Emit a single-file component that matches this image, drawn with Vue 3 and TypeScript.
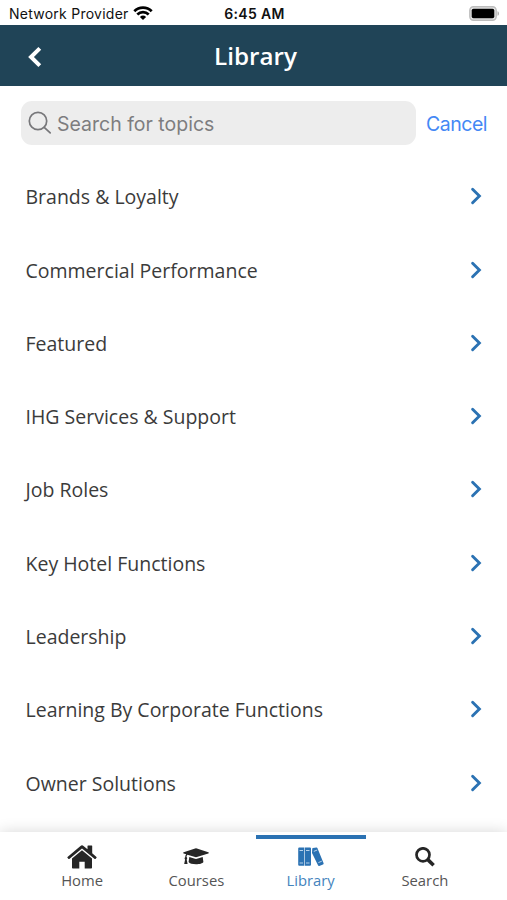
<script setup lang="ts">
import { ref } from 'vue'

type TabId = 'home' | 'courses' | 'library' | 'search'

interface Tab {
  id: TabId
  label: string
}

const topics: string[] = [
  'Brands & Loyalty',
  'Commercial Performance',
  'Featured',
  'IHG Services & Support',
  'Job Roles',
  'Key Hotel Functions',
  'Leadership',
  'Learning By Corporate Functions',
  'Owner Solutions',
]

const tabs: Tab[] = [
  { id: 'home', label: 'Home' },
  { id: 'courses', label: 'Courses' },
  { id: 'library', label: 'Library' },
  { id: 'search', label: 'Search' },
]

const activeTab = ref<TabId>('library')
const query = ref('')
</script>

<template>
  <div class="screen">
    <div class="status">
      <div class="carrier">
        <span>Network Provider</span>
        <svg class="wifi" viewBox="0 0 20 14" width="20" height="14">
          <g fill="none" stroke="#000" stroke-width="2.7">
            <path d="M1.3 5.2a12.4 12.4 0 0 1 17.4 0" />
            <path d="M4.3 8.5a8.1 8.1 0 0 1 11.4 0" />
          </g>
          <path d="M6.9 10.9a4.6 4.6 0 0 1 6.2 0L10 14z" fill="#000" />
        </svg>
      </div>
      <span class="time">6:45 AM</span>
      <svg class="battery" viewBox="0 0 31 15" width="31" height="15">
        <rect x=".8" y=".8" width="26.4" height="13.4" rx="3.6" fill="#e4e4e4" stroke="#bdbdbd" stroke-width="1.4" />
        <rect x="2.7" y="2.7" width="22.6" height="9.6" rx="1.8" fill="#000" />
        <path d="M28.5 5.2c2 .7 2 3.9 0 4.6z" fill="#b0b0b0" />
      </svg>
    </div>

    <header class="header">
      <button class="back" aria-label="Back">
        <svg viewBox="0 0 14 22" width="14" height="22">
          <path d="M11.8 2.3 3 11l8.8 8.7" fill="none" stroke="#fff" stroke-width="4" />
        </svg>
      </button>
      <h1>Library</h1>
    </header>

    <div class="search-row">
      <label class="search">
        <svg viewBox="0 0 24 24" width="24" height="24" fill="none" stroke="#77777a" stroke-width="1.7" stroke-linecap="round">
          <circle cx="10" cy="10" r="8.7" />
          <path d="m16.2 16.3 6 5.6" />
        </svg>
        <input v-model="query" type="text" placeholder="Search for topics" />
      </label>
      <button class="cancel" @click="query = ''">Cancel</button>
    </div>

    <ul class="topics">
      <li v-for="topic in topics" :key="topic">
        <span>{{ topic }}</span>
        <svg viewBox="0 0 12 18" width="12" height="18">
          <path d="m2.6 2.2 6.8 6.8-6.8 6.8" fill="none" stroke="#2b72b3" stroke-width="2.9" stroke-linecap="round" />
        </svg>
      </li>
    </ul>

    <nav class="tabbar">
      <button
        v-for="tab in tabs"
        :key="tab.id"
        class="tab"
        :class="{ active: tab.id === activeTab }"
        @click="activeTab = tab.id"
      >
        <svg v-if="tab.id === 'home'" viewBox="0 0 30 24" width="30" height="24" fill="currentColor">
          <path d="M15 5.200 25 13.400v9.300a.8.8 0 0 1-.8.8h-6.500v-6.700h-5.400v6.700H5.800a.8.8 0 0 1-.8-.8v-9.300z" />
          <path d="M13.500.9a2.300 2.300 0 0 1 3 0l4 3.400V1q0-.5.500-.5h3.700q.5 0 .5.500v7.200l4.300 3.700q.4.400 0 .8l-1 1.200q-.4.400-.8 0L15 3.400 2.300 13.900q-.4.400-.8 0l-1-1.200q-.4-.4 0-.8z" />
        </svg>
        <svg v-else-if="tab.id === 'courses'" viewBox="0 0 26 18" width="26" height="18" fill="currentColor">
          <path d="M12.100.4a3 3 0 0 1 1.800 0l11.400 3.800c.7.200.7 1 0 1.200L13.900 9a3 3 0 0 1-1.800 0L4.500 6.700c-.7.500-.9 1.300-1 2.400.9.600.9 1.700.2 2.300L4.600 16H1.200l.9-4.600c-.7-.6-.7-1.700.1-2.200 0-1.200.3-2.200 1-3L.7 5.400C0 5.200 0 4.400.7 4.200z" />
          <path d="M6.300 9.100 12 10.800q1 .3 2 0l5.700-1.700.7 4.900c-1.300 3-13.500 3-14.800 0z" />
        </svg>
        <svg v-else-if="tab.id === 'library'" viewBox="0 0 26 20" width="26" height="20">
          <path d="M.2 1.500q0-1 1-1H6v18.300H1.200q-1 0-1-1zM6.600.5H12q1 0 1 1v16.300q0 1-1 1H6.600zM14.200 2.300q-.3-1 .7-1.300L18.400.500q.8-.1 1.100.8l6.100 14.900q.3.900-.6 1.300l-3.700 1.400q-.9.300-1.300-.6L14 6z" fill="currentColor" />
          <path d="M1.600 3.500H5M8 3.500h3.500M1.600 16H5M8 16h3.500M15.800 4.400l3.400-1.400M20.400 15.600l3.400-1.400" stroke="#dceaf7" stroke-width=".8" />
        </svg>
        <svg v-else viewBox="0 0 20 20" width="20" height="20" fill="none" stroke="currentColor">
          <circle cx="8" cy="7.800" r="6.500" stroke-width="2.700" />
          <path d="m12.800 12.600 5.800 5.600" stroke-width="3.600" />
        </svg>
        <span>{{ tab.label }}</span>
      </button>
    </nav>
  </div>
</template>

<style>
body {
  margin: 0;
  background: #fff;
}
</style>

<style scoped>
.screen {
  display: flex;
  flex-direction: column;
  width: 507px;
  height: 900px;
  overflow: hidden;
  background: #fff;
  color: #3b3b3b;
  font-family: 'Open Sans', sans-serif;
}

button {
  padding: 0;
  border: 0;
  background: none;
  font: inherit;
  cursor: pointer;
}

svg {
  display: block;
  flex: none;
}

.status {
  display: grid;
  grid-template-columns: 1fr auto 1fr;
  align-items: center;
  flex: none;
  height: 25px;
  padding: 2px 7px 0 9px;
  box-sizing: border-box;
  color: #111;
  font: 14px/23px Inter, sans-serif;
}

.carrier {
  display: flex;
  align-items: center;
  gap: 4px;
  letter-spacing: 0.25px;
}

.wifi,
.battery {
  margin-bottom: 1px;
}

.time {
  font-weight: 600;
  letter-spacing: 0.35px;
}

.battery {
  justify-self: end;
}

.header {
  display: grid;
  grid-template-columns: 80px 1fr 80px;
  align-items: center;
  flex: none;
  height: 61px;
  padding-left: 4px;
  background: #204457;
  color: #fff;
}

.back {
  padding: 2px 0 0 24px;
}

.header h1 {
  margin: 0;
  padding-top: 1px;
  font-size: 24.2px;
  font-weight: 600;
  line-height: 32px;
  text-align: center;
}

.search-row {
  display: flex;
  align-items: center;
  flex: none;
  gap: 10px;
  padding: 15px 20px 15px 21px;
}

.search {
  display: flex;
  align-items: center;
  gap: 5px;
  flex: 1;
  min-width: 0;
  height: 44px;
  padding-left: 7px;
  box-sizing: border-box;
  border-radius: 11px;
  background: #ededed;
}

.search input {
  flex: 1;
  min-width: 0;
  padding: 2px 0 0;
  border: 0;
  outline: 0;
  background: none;
  color: #3b3b3b;
  font: 19.5px/24px Inter, sans-serif;
}

.search input::placeholder {
  color: #7d7d7f;
  opacity: 1;
}

.cancel {
  padding-top: 2px;
  color: #4488f5;
  font: 19.5px/24px Inter, sans-serif;
  letter-spacing: -0.5px;
}

.topics {
  flex: 1;
  min-height: 0;
  margin: 0;
  padding: 0.6px 0 0;
  list-style: none;
}

.topics li {
  display: flex;
  align-items: center;
  justify-content: space-between;
  height: 73.3px;
  padding: 0 25px 0 25.5px;
  font-size: 19.5px;
  line-height: 26px;
}

.topics svg {
  margin-bottom: 2px;
}

.tabbar {
  display: grid;
  grid-template-columns: repeat(4, 1fr);
  flex: none;
  height: 68px;
  padding: 0 25px;
  background: #fff;
  box-shadow: 0 0 14px rgba(0, 0, 0, 0.16);
  position: relative;
}

.tab {
  display: grid;
  grid-template-rows: 24px 22px;
  align-content: start;
  align-items: center;
  justify-items: center;
  margin: 3px 2px 0;
  padding-top: 6px;
  border-top: 4px solid transparent;
  color: #262626;
}

.tab span {
  color: #555;
  font-size: 14.8px;
  line-height: 20px;
}

.tab.active {
  border-top-color: #2b72b3;
  color: #2b72b3;
}

.tab.active span {
  color: #4484bd;
}
</style>
